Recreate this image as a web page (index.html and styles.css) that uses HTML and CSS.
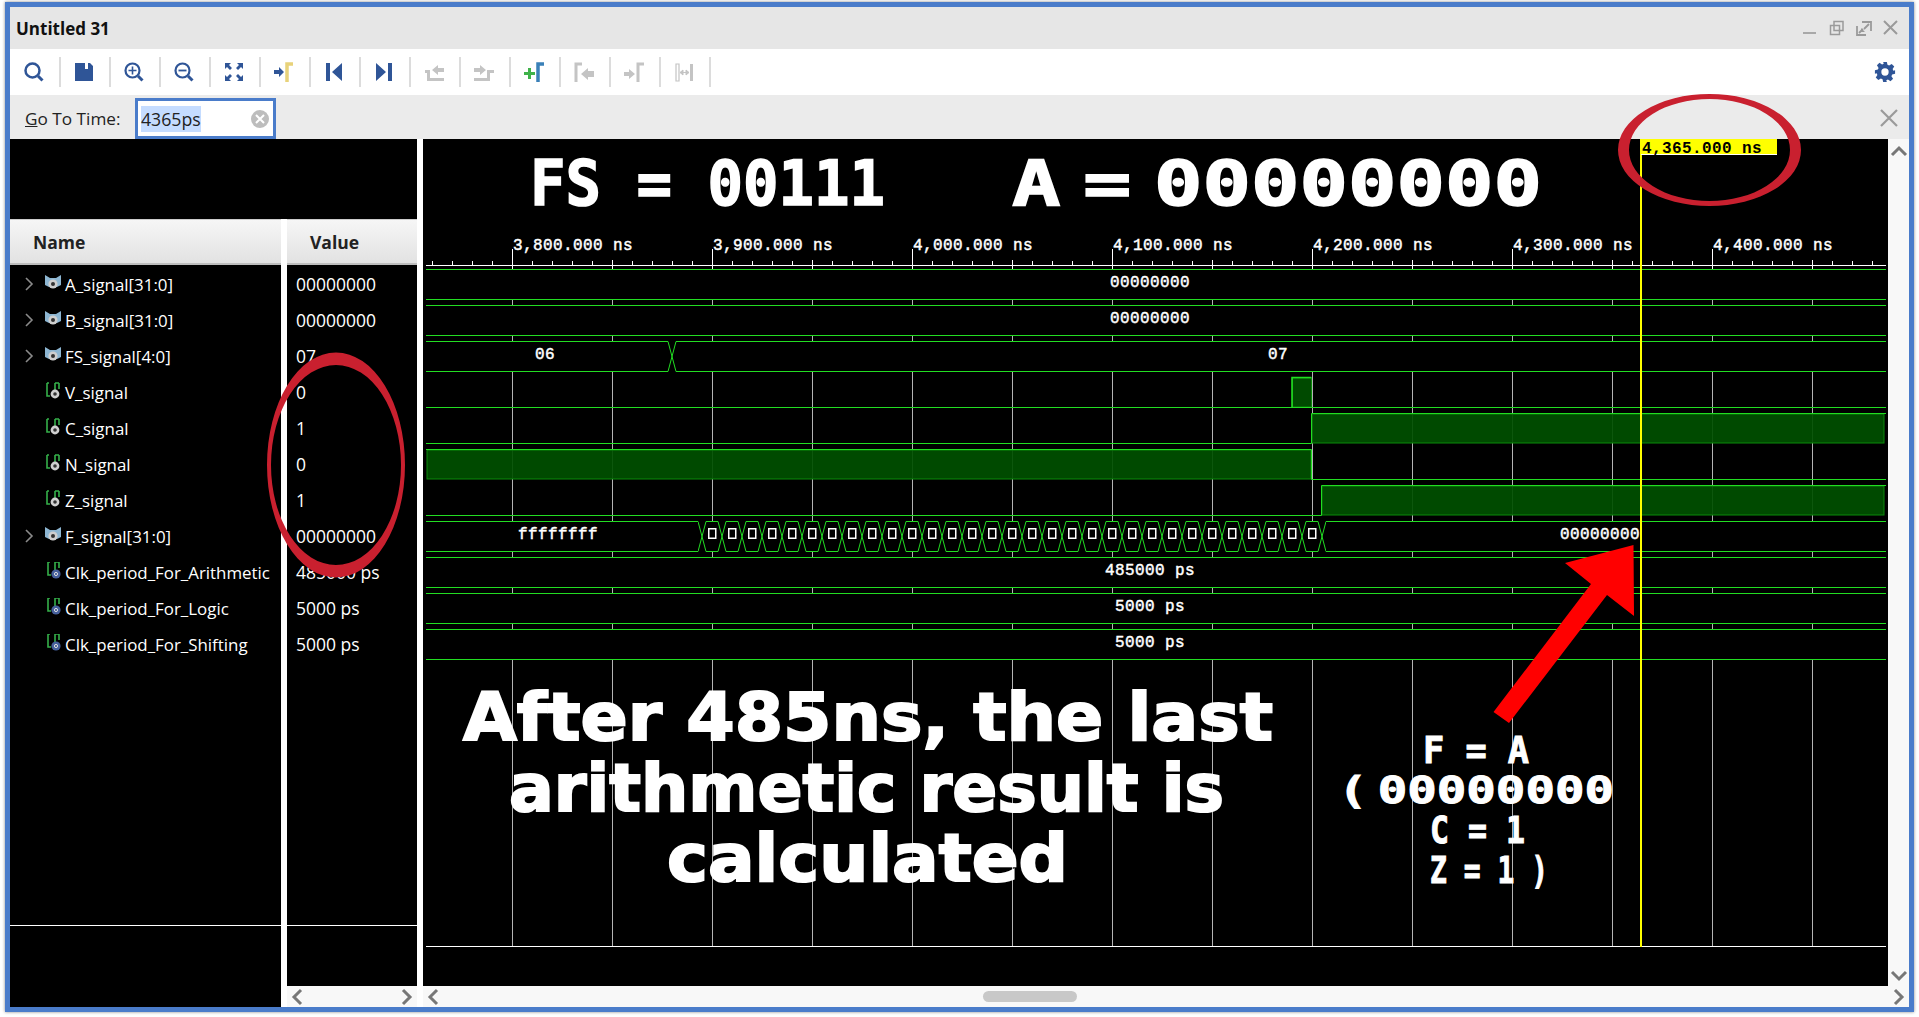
FILE: index.html
```html
<!DOCTYPE html>
<html>
<head>
  <meta charset="utf-8">
  <title>Untitled 31</title>
  <link rel="stylesheet" href="styles.css">
</head>
<body>
  <!-- shared icons -->
  <svg class="defs" width="0" height="0">
    <symbol id="i-chev" viewBox="0 0 12 16"><path d="M3 2l6 6-6 6" fill="none" stroke="#8a8a8a" stroke-width="1.6"/></symbol>
    <symbol id="i-bus" viewBox="0 0 18 18">
      <path d="M1 1l5 3h6l5-3v10l-4 2H5l-4-2z" fill="#8db6d2"/>
      <circle cx="9" cy="10" r="4.6" fill="#cfcfcf"/><circle cx="9" cy="10" r="2" fill="#333"/>
    </symbol>
    <symbol id="i-wire" viewBox="0 0 18 18">
      <path d="M3 1v13h3M3 1h2M11 1v8M15 1v6M11 1h4" fill="none" stroke="#35b04a" stroke-width="1.6"/>
      <circle cx="11" cy="12" r="4.4" fill="#cfcfcf"/><circle cx="11" cy="12" r="1.8" fill="#333"/>
    </symbol>
    <symbol id="i-const" viewBox="0 0 18 18">
      <path d="M4 0v13h3M4 0h2M11 0v8M15 0v6M11 0h4" fill="none" stroke="#35b04a" stroke-width="1.6"/>
      <circle cx="12" cy="12" r="4.6" fill="#46609c"/><circle cx="12" cy="12" r="1.6" fill="none" stroke="#ddd" stroke-width="1"/>
    </symbol>
  </svg>

  <div class="window">
    <div class="titlebar">
      <span class="title">Untitled 31</span>
      <div class="wincontrols">
        <svg width="20" height="20" viewBox="0 0 20 20"><path d="M3 15h13" stroke="#a8a8a8" stroke-width="2"/></svg>
        <svg width="20" height="20" viewBox="0 0 20 20"><path d="M7 3.500h9v9H7zM3.500 7.500h9v9h-9z" fill="none" stroke="#9a9a9a" stroke-width="1.500"/></svg>
        <svg width="20" height="20" viewBox="0 0 20 20"><path d="M8 4h9v9M3 8v9h9M15 6l-5 5M5 15l4-4" fill="none" stroke="#9a9a9a" stroke-width="1.800"/><path d="M7 10l4 4H7z" fill="#9a9a9a"/></svg>
        <svg width="20" height="20" viewBox="0 0 20 20"><path d="M3 3l13 13M16 3L3 16" stroke="#9a9a9a" stroke-width="2"/></svg>
      </div>
    </div>

    <div class="toolbar">
      <div class="tool"><svg width="24" height="24" viewBox="0 0 24 24"><circle cx="10.500" cy="10.500" r="7" fill="none" stroke="#2f5597" stroke-width="2.500"/><path d="M16 16l4.500 4.500" stroke="#2f5597" stroke-width="3"/></svg></div>
      <div class="tool"><svg width="24" height="24" viewBox="0 0 24 24"><path d="M3 3h10v6h3V3h2l3 3v15H3z" fill="#2f5597"/></svg></div>
      <div class="tool"><svg width="24" height="24" viewBox="0 0 24 24"><circle cx="10.500" cy="10.500" r="7" fill="none" stroke="#2f5597" stroke-width="2.200"/><path d="M16 16l4.500 4.500" stroke="#2f5597" stroke-width="3"/><path d="M6.500 10.500h8M10.500 6.500v8" stroke="#2f5597" stroke-width="1.600"/></svg></div>
      <div class="tool"><svg width="24" height="24" viewBox="0 0 24 24"><circle cx="10.500" cy="10.500" r="7" fill="none" stroke="#2f5597" stroke-width="2.200"/><path d="M16 16l4.500 4.500" stroke="#2f5597" stroke-width="3"/><path d="M6.500 10.500h8" stroke="#2f5597" stroke-width="1.800"/></svg></div>
      <div class="tool"><svg width="24" height="24" viewBox="0 0 24 24" fill="#2f5597"><path d="M3 3h6L7 5l3 3-2 2-3-3-2 2zM21 3v6l-2-2-3 3-2-2 3-3-2-2zM3 21v-6l2 2 3-3 2 2-3 3 2 2zM21 21h-6l2-2-3-3 2-2 3 3 2-2z"/></svg></div>
      <div class="tool"><svg width="24" height="24" viewBox="0 0 24 24"><path d="M2 10h5V7l5 5-5 5v-3H2z" fill="#2f5597"/><path d="M15 22V4h6" fill="none" stroke="#e8d27a" stroke-width="3.500"/></svg></div>
      <div class="tool"><svg width="24" height="24" viewBox="0 0 24 24" fill="#2f5597"><path d="M4 3h4v18H4zM20 3v18l-10-9z"/></svg></div>
      <div class="tool"><svg width="24" height="24" viewBox="0 0 24 24" fill="#2f5597"><path d="M16 3h4v18h-4zM4 3v18l10-9z"/></svg></div>
      <div class="tool"><svg width="24" height="24" viewBox="0 0 24 24"><path d="M3 10h5v8h14v3H5v-8H3zM22 8h-6V5l-6 5 6 5v-3h6z" fill="#c4c4c4"/></svg></div>
      <div class="tool"><svg width="24" height="24" viewBox="0 0 24 24"><path d="M2 8h6V5l6 5-6 5v-3H2zM15 10h7v3h-4v8H2v-3h13z" fill="#c4c4c4"/></svg></div>
      <div class="tool"><svg width="24" height="24" viewBox="0 0 24 24"><path d="M2 12h4V8h3v4h4v3H9v4H6v-4H2z" fill="#3fb24a"/><path d="M16 22V4h6" fill="none" stroke="#3a80b8" stroke-width="3.500"/></svg></div>
      <div class="tool"><svg width="24" height="24" viewBox="0 0 24 24"><path d="M4 22V4h6" fill="none" stroke="#c4c4c4" stroke-width="3"/><path d="M22 11h-6V8l-7 6 7 6v-3h6z" fill="#c4c4c4"/></svg></div>
      <div class="tool"><svg width="24" height="24" viewBox="0 0 24 24"><path d="M2 12h5V9l6 5-6 5v-3H2z" fill="#c4c4c4"/><path d="M16 22V4h6" fill="none" stroke="#c4c4c4" stroke-width="3"/></svg></div>
      <div class="tool"><svg width="24" height="24" viewBox="0 0 24 24"><path d="M4 4h3v17H4z" fill="none" stroke="#c4c4c4" stroke-width="1.200"/><path d="M18 4h3v17h-3z" fill="#c4c4c4"/><path d="M8 12.500h9M8 12.500l3-2.500v5zM17 12.500l-3-2.500v5z" fill="#c4c4c4" stroke="#c4c4c4"/></svg></div>
      <div class="gear">
        <svg width="22" height="22" viewBox="0 0 24 24"><path fill="#2f5597" fill-rule="evenodd" d="M10 1h4l.7 3.200 1.800.8 2.800-1.800 2.800 2.800-1.800 2.800.8 1.800L23 10v4l-3.200.7-.8 1.800 1.800 2.800-2.800 2.800-2.800-1.800-1.800.8L14 23h-4l-.7-3.200-1.800-.8-2.800 1.800-2.800-2.800 1.800-2.800-.8-1.800L1 14v-4l3.200-.7.8-1.800-1.800-2.800 2.800-2.800 2.800 1.800 1.800-.8zM12 8a4 4 0 1 0 0 8 4 4 0 0 0 0-8z"/></svg>
      </div>
    </div>

    <div class="gotobar">
      <label class="gotolabel"><u>G</u>o To Time:</label>
      <div class="gotoinput">
        <span class="selected">4365ps</span>
        <svg width="18" height="18" viewBox="0 0 18 18"><circle cx="9" cy="9" r="9" fill="#bdbdbd"/><path d="M5 5l8 8M13 5l-8 8" stroke="#fff" stroke-width="2"/></svg>
      </div>
      <svg class="gotoclose" width="20" height="20" viewBox="0 0 20 20"><path d="M2 2l16 16M18 2L2 18" stroke="#9a9a9a" stroke-width="2.200"/></svg>
    </div>

    <div class="main">
      <div class="panel namepanel">
        <div class="headgap"></div>
        <div class="colhead">Name</div>
        <div class="rows">
          <div class="row"><svg class="chev"><use href="#i-chev"/></svg><svg class="sig"><use href="#i-bus"/></svg>A_signal[31:0]</div>
          <div class="row"><svg class="chev"><use href="#i-chev"/></svg><svg class="sig"><use href="#i-bus"/></svg>B_signal[31:0]</div>
          <div class="row"><svg class="chev"><use href="#i-chev"/></svg><svg class="sig"><use href="#i-bus"/></svg>FS_signal[4:0]</div>
          <div class="row nochev"><svg class="sig"><use href="#i-wire"/></svg>V_signal</div>
          <div class="row nochev"><svg class="sig"><use href="#i-wire"/></svg>C_signal</div>
          <div class="row nochev"><svg class="sig"><use href="#i-wire"/></svg>N_signal</div>
          <div class="row nochev"><svg class="sig"><use href="#i-wire"/></svg>Z_signal</div>
          <div class="row"><svg class="chev"><use href="#i-chev"/></svg><svg class="sig"><use href="#i-bus"/></svg>F_signal[31:0]</div>
          <div class="row nochev"><svg class="sig"><use href="#i-const"/></svg>Clk_period_For_Arithmetic</div>
          <div class="row nochev"><svg class="sig"><use href="#i-const"/></svg>Clk_period_For_Logic</div>
          <div class="row nochev"><svg class="sig"><use href="#i-const"/></svg>Clk_period_For_Shifting</div>
        </div>
        <div class="foot"></div>
      </div>

      <div class="panel valuepanel">
        <div class="headgap"></div>
        <div class="colhead">Value</div>
        <div class="rows">
          <div class="row val">00000000</div>
          <div class="row val">00000000</div>
          <div class="row val">07</div>
          <div class="row val">0</div>
          <div class="row val">1</div>
          <div class="row val">0</div>
          <div class="row val">1</div>
          <div class="row val">00000000</div>
          <div class="row val">485000 ps</div>
          <div class="row val">5000 ps</div>
          <div class="row val">5000 ps</div>
        </div>
        <div class="foot"></div>
        <div class="hscroll">
          <svg width="12" height="18" viewBox="0 0 12 18"><path d="M10 2L3 9l7 7" class="arrow"/></svg>
          <svg width="12" height="18" viewBox="0 0 12 18"><path d="M2 2l7 7-7 7" class="arrow"/></svg>
        </div>
      </div>

      <div class="wavecol">
        <div class="waverow">
          <svg class="wave" width="1465" height="847" viewBox="423 139 1465 847">
            <defs>
              <pattern id="grid" patternUnits="userSpaceOnUse" x="512" y="0" width="100" height="10"><rect width="1" height="10" fill="#b4b4b4"/></pattern>
              <pattern id="minor" patternUnits="userSpaceOnUse" x="432" y="261" width="20" height="4"><rect width="1" height="4" fill="#fff"/></pattern>
              <pattern id="major" patternUnits="userSpaceOnUse" x="512" y="260" width="100" height="9"><rect width="1" height="9" fill="#fff"/></pattern>
              <pattern id="label" patternUnits="userSpaceOnUse" x="512" y="249" width="200" height="20"><rect width="1" height="20" fill="#fff"/></pattern>
              <pattern id="hex" patternUnits="userSpaceOnUse" x="687" y="521" width="20" height="31">
                <path d="M11 .5L19 30.500M11 30.500L19 .5M0 .5h11M19 .5h1M0 30.500h11M19 30.500h1" fill="none" stroke="#22dd22"/>
                <rect x="1.750" y="7.750" width="7" height="9.500" fill="none" stroke="#fff" stroke-width="1.500"/>
              </pattern>
            </defs>

            <!-- time grid -->
            <rect x="426" y="269" width="1460" height="677" fill="url(#grid)"/>

            <!-- bus rows cover the grid -->
            <g fill="#000">
              <rect x="426" y="270" width="1460" height="29"/>
              <rect x="426" y="306" width="1460" height="29"/>
              <rect x="426" y="342" width="1460" height="29"/>
              <rect x="426" y="522" width="1460" height="29"/>
              <rect x="426" y="558" width="1460" height="29"/>
              <rect x="426" y="594" width="1460" height="29"/>
              <rect x="426" y="630" width="1460" height="29"/>
            </g>

            <!-- ruler -->
            <rect x="426" y="261" width="1460" height="4" fill="url(#minor)"/>
            <rect x="426" y="260" width="1460" height="9" fill="url(#major)"/>
            <rect x="426" y="249" width="1460" height="20" fill="url(#label)"/>
            <rect x="426" y="265" width="1460" height="1" fill="#fff"/>
            <g class="wavetext">
              <text x="513" y="250">3,800.000 ns</text>
              <text x="713" y="250">3,900.000 ns</text>
              <text x="913" y="250">4,000.000 ns</text>
              <text x="1113" y="250">4,100.000 ns</text>
              <text x="1313" y="250">4,200.000 ns</text>
              <text x="1513" y="250">4,300.000 ns</text>
              <text x="1713" y="250">4,400.000 ns</text>
            </g>

            <!-- signals -->
            <g class="high">
              <rect x="1292.500" y="378" width="19" height="29"/>
              <rect x="1312" y="414" width="572" height="29"/>
              <rect x="427" y="450" width="884" height="29"/>
              <rect x="1322" y="486" width="562" height="29"/>
            </g>
            <g class="trace">
              <path d="M426 269.500H1886M426 299.500H1886"/>
              <path d="M426 305.500H1886M426 335.500H1886"/>
              <path d="M426 341.500H668L676 371.500H1886M426 371.500H668L676 341.500H1886"/>
              <path d="M426 407.500H1886"/>
              <path d="M426 443.500H1311.500V413.500H1886"/>
              <path d="M426 449.500H1311.500V479.500"/>
              <path d="M1311.500 479.500H1886"/>
              <path d="M426 515.500H1321.500V485.500H1886"/>
              <path d="M426 521.500H698M426 551.500H698M1326 521.500H1886M1326 551.500H1886"/>
              <path d="M426 557.500H1886M426 587.500H1886"/>
              <path d="M426 593.500H1886M426 623.500H1886"/>
              <path d="M426 629.500H1886M426 659.500H1886"/>
            </g>
            <path class="trace thick" d="M1292 407V377.500H1311.500"/>
            <rect x="698" y="521" width="628" height="31" fill="url(#hex)"/>

            <g class="wavetext mid">
              <text x="1150" y="287">00000000</text>
              <text x="1150" y="323">00000000</text>
              <text x="545" y="359">06</text>
              <text x="1278" y="359">07</text>
              <text x="558" y="539">ffffffff</text>
              <text x="1600" y="539">00000000</text>
              <text x="1150" y="575">485000 ps</text>
              <text x="1150" y="611">5000 ps</text>
              <text x="1150" y="647">5000 ps</text>
            </g>

            <rect x="426" y="946" width="1460" height="1" fill="#fff"/>

            <!-- cursor -->
            <rect x="1640" y="139" width="2" height="808" fill="#ffff00"/>
            <rect x="1641" y="139" width="136" height="16" fill="#ffff00"/>
            <rect x="1641" y="154" width="136" height="1" fill="#fff"/>
            <text class="cursortext" x="1642" y="153">4,365.000 ns</text>

            <!-- annotations typed on the capture -->
            <g class="note">
              <text x="530" y="205" font-size="62" textLength="355" lengthAdjust="spacingAndGlyphs">FS = 00111</text>
              <text class="tight" x="1012" y="205" font-size="62" textLength="530" lengthAdjust="spacingAndGlyphs">A = 00000000</text>
            </g>
            <g class="note sans">
              <text x="463" y="740" font-size="66" textLength="810" lengthAdjust="spacingAndGlyphs">After 485ns, the last</text>
              <text x="509" y="811" font-size="66" textLength="715" lengthAdjust="spacingAndGlyphs">arithmetic result is</text>
              <text x="667" y="881" font-size="66" textLength="401" lengthAdjust="spacingAndGlyphs">calculated</text>
            </g>
            <g class="note small">
              <text x="1423" y="763" font-size="38" textLength="106" lengthAdjust="spacingAndGlyphs">F = A</text>
              <text class="tightsmall" x="1338" y="803" font-size="38" textLength="276" lengthAdjust="spacingAndGlyphs">( 00000000</text>
              <text x="1430" y="843" font-size="38" textLength="95" lengthAdjust="spacingAndGlyphs">C = 1</text>
              <text x="1430" y="883" font-size="38" textLength="118" lengthAdjust="spacingAndGlyphs">Z = 1 )</text>
            </g>
          </svg>
          <div class="vscroll">
            <svg width="18" height="12" viewBox="0 0 18 12"><path d="M2 10l7-7 7 7" class="arrow"/></svg>
            <svg width="18" height="12" viewBox="0 0 18 12"><path d="M2 2l7 7 7-7" class="arrow"/></svg>
          </div>
        </div>
        <div class="hscroll widescroll">
          <svg width="12" height="18" viewBox="0 0 12 18"><path d="M10 2L3 9l7 7" class="arrow"/></svg>
          <div class="thumb"></div>
          <svg width="12" height="18" viewBox="0 0 12 18"><path d="M2 2l7 7-7 7" class="arrow"/></svg>
        </div>
      </div>
    </div>
  </div>

  <!-- red markup drawn over the whole capture -->
  <svg class="markup" width="1919" height="1017" viewBox="0 0 1919 1017">
    <path fill-rule="evenodd" fill="#c9202f" d="M1618 150a91.500 56 0 1 0 183 0a91.500 56 0 1 0-183 0zM1629 150a80.500 51 0 1 1 161 0a80.500 51 0 1 1-161 0z"/>
    <path fill-rule="evenodd" fill="#c9202f" d="M267 465a69 112.500 0 1 0 138 0a69 112.500 0 1 0-138 0zM271 465a65 100 0 1 1 130 0a65 100 0 1 1-130 0z"/>
    <path fill="#ff0000" d="M1633.500 545L1565 563L1591 584L1493.500 712L1509 723L1607 595L1634 616z"/>
  </svg>
</body>
</html>
```

FILE: styles.css
```css
* { box-sizing: border-box; }
html, body { margin: 0; height: 100%; background: #fff; overflow: hidden; }
body { font-family: "Open Sans", "Liberation Sans", sans-serif; position: relative; }
.defs { position: absolute; }

.window { width: 1909px; height: 1010px; margin: 2px 0 0 5px; border: 5px solid #4a7cca;
          box-shadow: 0 0 3px #888; display: flex; flex-direction: column; background: #fff; }

.titlebar { height: 42px; background: #e6e6e6; display: flex; align-items: center; justify-content: space-between; padding: 0 8px 0 6px; }
.title { font-size: 17px; font-weight: 700; color: #111; }
.wincontrols { display: flex; gap: 7px; }

.toolbar { height: 46px; background: #fff; display: flex; align-items: center; padding-left: 1px; }
.tool { width: 50px; height: 30px; border-right: 2px solid #dcdcdc; display: flex; align-items: center; justify-content: center; padding-right: 2px; }
.gear { margin-left: auto; margin-right: 13px; display: flex; }

.gotobar { height: 44px; background: #ebebeb; display: flex; align-items: flex-end; padding-left: 15px; position: relative; }
.gotolabel { font-size: 17.2px; color: #222; width: 110px; align-self: center; margin-top: 3px; }
.gotoinput { width: 141px; height: 41px; background: #fff; border: 3px solid #4a7cca; display: flex; align-items: center; justify-content: space-between; padding: 0 4px 0 3px; font-size: 17.7px; color: #222; }
.selected { background: #c5dcff; line-height: 26px; }
.gotoclose { position: absolute; right: 10px; top: 13px; }

.main { flex: 1; display: flex; background: #fff; min-height: 0; }
.panel { display: flex; flex-direction: column; background: #000; }
.namepanel { width: 271px; margin-right: 6px; }
.namepanel .headgap { width: 277px; background: #000; }
.valuepanel { width: 130px; margin-right: 6px; }
.headgap { height: 80px; flex: none; }
.colhead { height: 46px; flex: none; padding-left: 23px; line-height: 44px; font-size: 17.5px; font-weight: 700; color: #222;
           background: linear-gradient(#f6f6f6, #e2e2e2); border-top: 1px solid #ccc; border-bottom: 2px solid #bdbdbd; }
.rows { flex: none; height: 661px; padding-top: 1px; border-bottom: 1px solid #fff; }
.row { height: 36px; display: flex; align-items: center; color: #fff; font-size: 16.9px; white-space: nowrap; }
.val { padding-left: 9px; font-size: 17.5px; }
.chev { width: 12px; height: 16px; margin-left: 13px; }
.sig { width: 18px; height: 18px; margin: -3px 3px 0 9px; }
.nochev .sig { margin-left: 34px; }
.foot { flex: 1; }

.hscroll { height: 21px; flex: none; background: #f8f8f8; display: flex; align-items: center; justify-content: space-between; padding: 0 4px; }
.arrow { fill: none; stroke: #777; stroke-width: 3; }

.wavecol { flex: 1; display: flex; flex-direction: column; min-width: 0; }
.waverow { display: flex; height: 847px; }
.wave { display: block; background: #000; flex: none; }
.vscroll { width: 21px; background: #f8f8f8; display: flex; flex-direction: column; align-items: center; justify-content: space-between; padding: 6px 0 4px; }
.widescroll { position: relative; padding-right: 4px; }
.thumb { position: absolute; left: 560px; top: 5px; width: 94px; height: 11px; border-radius: 6px; background: #c8c8c8; }

.trace { fill: none; stroke: #22dd22; stroke-width: 1; }
.thick { stroke-width: 1.6; }
.high rect { fill: #005000; fill-opacity: .93; stroke: #0b8a0b; stroke-width: 1; }
.wavetext text { font-family: "Liberation Mono", monospace; font-weight: 400; font-size: 16px; letter-spacing: .4px; fill: #fff; stroke: #fff; stroke-width: .45px; }
.wavetext.mid text { text-anchor: middle; }
.cursortext { font-family: "Liberation Mono", monospace; font-weight: 700; font-size: 16px; letter-spacing: .4px; fill: #000; }
.note text { font-family: "DejaVu Sans Mono", monospace; font-weight: 700; fill: #fff; stroke: #fff; stroke-width: 1.500px; }
.note .tight { word-spacing: -20px; }
.note .tightsmall { word-spacing: -15px; }
.note.sans text { font-family: "DejaVu Sans", sans-serif; stroke-width: 2px; }
.note.small text { stroke-width: 1px; }

.markup { position: absolute; left: 0; top: 0; pointer-events: none; }
```
